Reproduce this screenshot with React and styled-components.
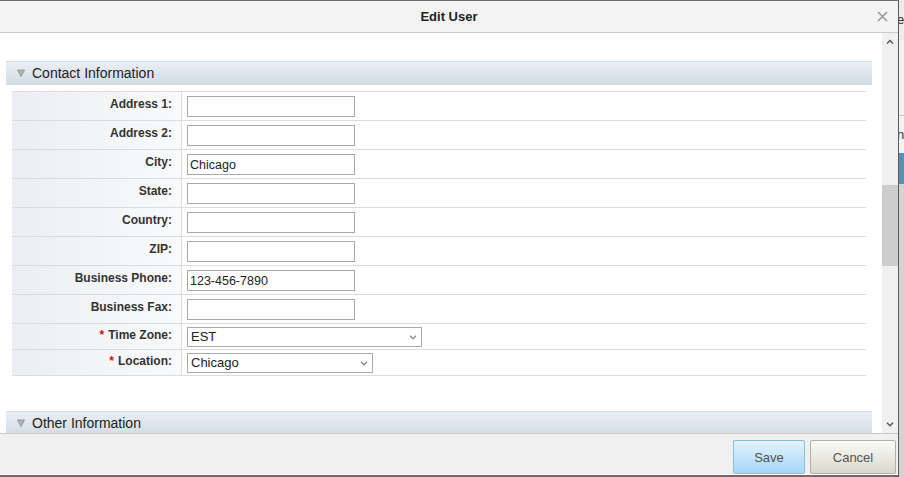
import React from 'react';
import styled, { createGlobalStyle } from 'styled-components';

const Global = createGlobalStyle`
  html, body {
    margin: 0;
    padding: 0;
    background: #cfcfcf;
    overflow: hidden;
  }
  body {
    font-family: "Liberation Sans", Arial, sans-serif;
  }
`;

const Screen = styled.div`
  display: flex;
  width: 904px;
  height: 477px;
  background: #d4d4d4;
`;

const Dialog = styled.div`
  width: 898px;
  height: 474px;
  display: flex;
  flex-direction: column;
  background: #fff;
  border-top: 1px solid #6e6e6e;
  border-right: 1px solid #5a5a5a;
  border-bottom: 2px solid #6a6a6a;
  flex-shrink: 0;
`;

const TitleBar = styled.div`
  height: 31px;
  display: grid;
  grid-template-columns: 1fr auto 1fr;
  align-items: center;
  background: #f3f3f3;
  border-bottom: 1px solid #cbcbcb;
`;

const Title = styled.div`
  grid-column: 2;
  font-size: 13px;
  font-weight: bold;
  color: #222;
`;

const CloseButton = styled.div`
  justify-self: end;
  padding-right: 10px;
  display: flex;
  align-items: center;
`;

const Body = styled.div`
  height: 400px;
  display: flex;
`;

const Content = styled.div`
  flex: 1;
  overflow: hidden;
  padding-top: 28px;
`;

const ScrollBar = styled.div`
  width: 16px;
  background: #f0f0f0;
  display: flex;
  flex-direction: column;
  align-items: center;
`;

const ScrollArrow = styled.div`
  height: ${p => p.$h}px;
  display: flex;
  align-items: ${p => (p.$down ? 'flex-end' : 'flex-start')};
  padding-top: ${p => (p.$down ? 0 : 6)}px;
  padding-bottom: ${p => (p.$down ? 6 : 0)}px;
  box-sizing: border-box;
`;

const Thumb = styled.div`
  width: 16px;
  height: 81px;
  background: #cdcdcd;
`;

const Track = styled.div`
  flex: 1;
  display: flex;
  flex-direction: column;
`;

const SectionHeader = styled.div`
  height: 24px;
  margin: ${p => p.$top || 0}px 10px 0 6px;
  display: flex;
  align-items: center;
  gap: 7px;
  padding-left: 11px;
  background: linear-gradient(to bottom, #eaeff4, #d2dbe4);
  border-top: 1px solid #d6dde5;
  font-size: 14px;
  color: #222;
  line-height: 1;
  padding-bottom: 1px;
  box-sizing: border-box;
`;

const Caret = styled.svg`
  flex-shrink: 0;
`;

const Form = styled.div`
  margin: 6px 16px 0 12px;
  border-top: 1px solid #dcdcdc;
`;

const Row = styled.div`
  display: flex;
  height: ${p => p.$h}px;
  border-bottom: 1px solid #dcdcdc;
`;

const Label = styled.div`
  width: 160px;
  border-right: 1px solid #dcdcdc;
  background: linear-gradient(to right, #eceef1, #f9fafb);
  display: flex;
  align-items: center;
  justify-content: flex-end;
  padding: 0 9px 4px 0;
  font-size: 12px;
  font-weight: bold;
  color: #333;
`;

const Required = styled.span`
  color: #cc1111;
  margin-right: 4px;
`;

const Field = styled.div`
  flex: 1;
  display: flex;
  align-items: center;
  padding-left: 5px;
`;

const TextInput = styled.input`
  width: 168px;
  height: 21px;
  box-sizing: border-box;
  border: 1px solid #a9a9a9;
  padding: 1px 2px 0;
  font-family: "Liberation Sans", Arial, sans-serif;
  font-size: 12.5px;
  color: #222;
  outline: none;
`;

const SelectWrap = styled.div`
  position: relative;
  width: ${p => p.$w}px;
  height: 20px;
`;

const Select = styled.select`
  appearance: none;
  width: 100%;
  height: 20px;
  box-sizing: border-box;
  border: 1px solid #a9a9a9;
  background: #fff;
  padding: 0 0 0 3px;
  font-family: "Liberation Sans", Arial, sans-serif;
  font-size: 13px;
  color: #222;
  outline: none;
`;

const SelectArrow = styled.svg`
  position: absolute;
  right: 5px;
  top: 8px;
  pointer-events: none;
`;

const Footer = styled.div`
  border-top: 1px solid #c8c8c8;
  background: #f0f0f0;
  display: flex;
  justify-content: flex-end;
  align-items: flex-start;
  gap: 5px;
  padding: 6px 2px 0 0;
  box-sizing: border-box;
  height: 41px;
`;

const Button = styled.button`
  height: 34px;
  width: ${p => p.$w}px;
  border: 1px solid ${p => (p.$primary ? '#86bde3' : '#b0b0a8')};
  border-radius: 2px;
  background: ${p =>
    p.$primary
      ? 'linear-gradient(to bottom, #e4f3fe, #a6d6f8)'
      : 'linear-gradient(to bottom, #fbfbf8, #d9d8cc)'};
  font-family: "Liberation Sans", Arial, sans-serif;
  font-size: 13px;
  color: #555;
  padding: 0;
`;

const PageStrip = styled.div`
  width: 5px;
  height: 477px;
  overflow: hidden;
  display: flex;
  flex-direction: column;
`;

const StripBlock = styled.div`
  height: ${p => p.$h}px;
  background: ${p => p.$bg};
  border-bottom: ${p => (p.$line ? '1px solid #c4c4c4' : 'none')};
  font-size: 13px;
  color: #333;
  line-height: ${p => p.$h}px;
  white-space: nowrap;
  margin-left: -2px;
  flex-shrink: 0;
`;

const Chevron = ({ up, color = '#555', w = 8 }) => (
  <svg width={w} height="5" viewBox="0 0 8 5">
    <polyline
      points={up ? '1,4.5 4,1.5 7,4.5' : '1,0.8 4,3.8 7,0.8'}
      fill="none"
      stroke={color}
      strokeWidth="1.4"
    />
  </svg>
);

const SectionCaret = () => (
  <Caret width="8" height="8" viewBox="0 0 8 8">
    <path d="M0.5 1 L7.5 1 L4 7.5 Z" fill="#b4b4b4" stroke="#8c8c8c" strokeWidth="0.8" />
  </Caret>
);

const fields = [
  { label: 'Address 1:', value: '' },
  { label: 'Address 2:', value: '' },
  { label: 'City:', value: 'Chicago' },
  { label: 'State:', value: '' },
  { label: 'Country:', value: '' },
  { label: 'ZIP:', value: '' },
  { label: 'Business Phone:', value: '123-456-7890' },
  { label: 'Business Fax:', value: '' },
];

const selects = [
  { label: 'Time Zone:', value: 'EST', width: 235 },
  { label: 'Location:', value: 'Chicago', width: 186 },
];

export default function App() {
  return (
    <Screen>
      <Global />
      <Dialog>
        <TitleBar>
          <Title>Edit User</Title>
          <CloseButton>
            <svg width="11" height="11" viewBox="0 0 11 11">
              <path d="M1 1 L10 10 M10 1 L1 10" stroke="#9a9a9a" strokeWidth="1.6" />
            </svg>
          </CloseButton>
        </TitleBar>
        <Body>
          <Content>
            <SectionHeader>
              <SectionCaret />
              Contact Information
            </SectionHeader>
            <Form>
              {fields.map(f => (
                <Row key={f.label} $h={28}>
                  <Label>{f.label}</Label>
                  <Field>
                    <TextInput defaultValue={f.value} />
                  </Field>
                </Row>
              ))}
              {selects.map(s => (
                <Row key={s.label} $h={25}>
                  <Label>
                    <Required>*</Required>
                    {s.label}
                  </Label>
                  <Field>
                    <SelectWrap $w={s.width}>
                      <Select defaultValue={s.value}>
                        <option>{s.value}</option>
                      </Select>
                      <SelectArrow width="8" height="5" viewBox="0 0 8 5">
                        <polyline points="1,0.8 4,3.8 7,0.8" fill="none" stroke="#8a8a8a" strokeWidth="1.3" />
                      </SelectArrow>
                    </SelectWrap>
                  </Field>
                </Row>
              ))}
            </Form>
            <SectionHeader $top={35}>
              <SectionCaret />
              Other Information
            </SectionHeader>
          </Content>
          <ScrollBar>
            <ScrollArrow $h={17}>
              <Chevron up />
            </ScrollArrow>
            <Track>
              <div style={{ height: 135 }} />
              <Thumb />
            </Track>
            <ScrollArrow $h={17} $down>
              <Chevron />
            </ScrollArrow>
          </ScrollBar>
        </Body>
        <Footer>
          <Button $primary $w={72}>Save</Button>
          <Button $w={86}>Cancel</Button>
        </Footer>
      </Dialog>
      <PageStrip>
        <StripBlock $h={40} $bg="#ececec">e</StripBlock>
        <StripBlock $h={75} $bg="#f2f2f2" $line />
        <StripBlock $h={37} $bg="#f4f4f4">n</StripBlock>
        <StripBlock $h={31} $bg="#5b8eb2" />
        <StripBlock $h={294} $bg="#d3d3d3" />
      </PageStrip>
    </Screen>
  );
}
